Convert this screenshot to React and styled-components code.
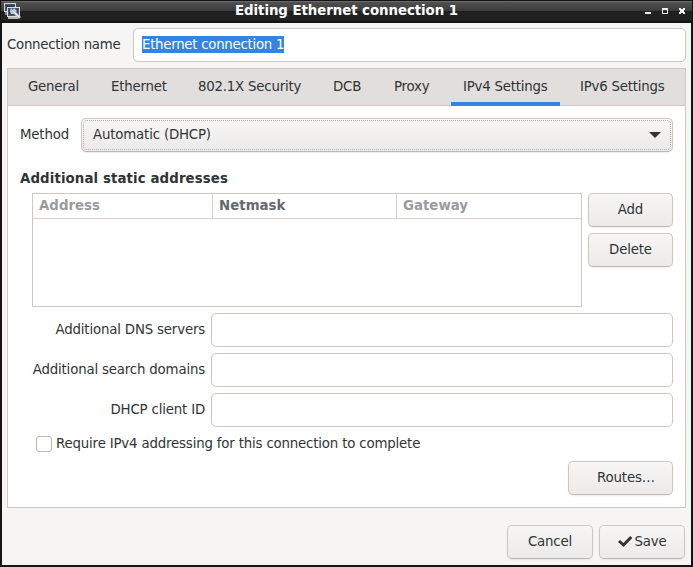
import React from 'react';
import styled, { createGlobalStyle, css } from 'styled-components';

const GlobalStyle = createGlobalStyle`
  *, *::before, *::after { box-sizing: border-box; }
  html, body { margin: 0; padding: 0; background: #101010; overflow: hidden; }
  button, input { font: inherit; color: inherit; letter-spacing: inherit; }
`;

const Frame = styled.div`
  width: 693px;
  height: 567px;
  padding: 0 2px 2px;
  background: #141414;
  color: #2e3436;
  font: 13.333px/16px "DejaVu Sans", sans-serif;
  letter-spacing: -0.17px;
  display: flex;
  flex-direction: column;
`;

const TitleBar = styled.header`
  flex: none;
  height: 23px;
  margin: 0 -1px;
  padding: 0 5px 0 3px;
  display: grid;
  grid-template-columns: 60px 1fr 60px;
  align-items: center;
  background: linear-gradient(#141414 0 1px, #6a6a6a 1px 2px, #515151 2px, #3b3b3b 11px, #202020 11px, #222 20px, #141414 21px);
`;

const Title = styled.h1`
  margin: 0;
  padding: 0 0 1px 2px;
  font-size: 13.333px;
  line-height: 16px;
  font-weight: bold;
  letter-spacing: -0.05px;
  color: #fff;
  text-align: center;
  white-space: nowrap;
`;

const WindowControls = styled.div`
  display: flex;
  justify-content: flex-end;
  svg { display: block; }
`;

const Content = styled.main`
  flex: 1;
  background: #f6f5f4;
  padding: 5px 5px 6px;
  display: flex;
  flex-direction: column;
`;

const NameRow = styled.div`
  display: grid;
  grid-template-columns: 114px 1fr;
  gap: 12px;
  align-items: center;
  margin-bottom: 6px;
  letter-spacing: -0.27px;
`;

const Label = styled.label`
  white-space: nowrap;
  text-align: ${p => (p.$end ? 'right' : 'left')};
`;

const Entry = styled.div`
  height: 34px;
  border: 1px solid #cdc7c2;
  border-radius: 5px;
  background: #fff;
  padding: 7px 8px;
`;

const Selection = styled.span`
  display: inline-block;
  height: 17px;
  line-height: 17px;
  background: #3584e4;
  color: #fff;
  white-space: nowrap;
`;

const Notebook = styled.section`
  height: 440px;
  border: 1px solid #cdc7c2;
  background: #fff;
`;

const TabBar = styled.nav`
  height: 37px;
  padding: 0 4px;
  display: flex;
  background: #e1dedb;
  border-bottom: 1px solid #cdc7c2;
  letter-spacing: -0.21px;
`;

const Tab = styled.div`
  flex: none;
  width: ${p => p.$width}px;
  height: 37px;
  margin: 0 4px;
  padding: 10px 0 0 12px;
  white-space: nowrap;
  ${p => p.$active && css`box-shadow: inset 0 -4px #3584e4;`}
`;

const Page = styled.div`
  padding: 12px;
`;

const buttonFace = css`
  border: 1px solid #cdc7c2;
  border-bottom-color: #bfb8b1;
  border-radius: 5px;
  background: linear-gradient(#f6f5f4 2px, #edebe9 31px);
  box-shadow: inset 0 1px #fbfafa, 0 1px 2px rgba(0, 0, 0, 0.07);
`;

const MethodRow = styled.div`
  display: grid;
  grid-template-columns: 55px 1fr;
  gap: 6px;
  align-items: center;
`;

const Combo = styled.div`
  ${buttonFace}
  height: 34px;
  padding: 1px;
`;

const ComboFocus = styled.div`
  height: 30px;
  border: 1px dotted #a9abaa;
  border-radius: 4px;
  padding: 0 9px;
  display: flex;
  align-items: center;
  justify-content: space-between;
`;

const Heading = styled.h2`
  margin: 19px 0 6px;
  font-size: 13.333px;
  line-height: 16px;
  font-weight: bold;
  letter-spacing: 0.11px;
`;

const Indented = styled.div`
  padding-left: 12px;
`;

const AddressArea = styled.div`
  display: grid;
  grid-template-columns: 550px 85px;
  gap: 6px;
`;

const AddressTable = styled.div`
  height: 114px;
  border: 1px solid #cdc7c2;
`;

const TableHead = styled.div`
  display: grid;
  grid-template-columns: 180px 184px 1fr;
  height: 25px;
  border-bottom: 1px solid #d5d0cc;
`;

const HeadCell = styled.div`
  padding: 4px 6px 0;
  font-weight: bold;
  letter-spacing: 0.02px;
  color: ${p => (p.$dark ? '#66696b' : '#999c9b')};
  &:not(:last-child) { border-right: 1px solid #d5d0cc; }
`;

const ButtonColumn = styled.div`
  display: flex;
  flex-direction: column;
  gap: 6px;
`;

const Button = styled.button`
  ${buttonFace}
  height: 34px;
  width: ${p => p.$width || 85}px;
  padding: 0 0 0 ${p => p.$shift || 0}px;
  display: flex;
  align-items: center;
  justify-content: center;
  line-height: 16px;
  white-space: nowrap;
  svg { margin: 0 1px 2px 0; }
`;

const Fields = styled.div`
  margin-top: 6px;
  display: grid;
  grid-template-columns: 173px 1fr;
  gap: 6px;
  align-items: center;
`;

const CheckRow = styled.div`
  display: flex;
  align-items: center;
  gap: 4px;
  height: 16px;
  margin: 9px 0 9px 4px;
`;

const CheckBox = styled.span`
  width: 16px;
  height: 16px;
  border: 1px solid #bfb8b1;
  border-radius: 3px;
  background: #fff;
`;

const Trailing = styled.div`
  display: flex;
  justify-content: flex-end;
`;

const Actions = styled.footer`
  display: flex;
  justify-content: flex-end;
  gap: 6px;
  padding: 17px 1px 0 0;
`;

const NetworkIcon = () => (
  <svg width="17" height="17" viewBox="0 0 17 17" shapeRendering="crispEdges">
    <path d="M0 0h12v9H0z" fill="#d4d4cc" />
    <path d="M1 1h10v7H1z" fill="#4b5563" />
    <path d="M2 2h8v5H2z" fill="#1c3f75" />
    <path d="M1 9h3v3H1z" fill="#8f908a" />
    <path d="M3 4h13v10H3z" fill="#deded6" />
    <path d="M4 5h11v8H4z" fill="#4b5563" />
    <path d="M5 6h9v6H5z" fill="#234b85" />
    <path d="M4 14h10v2H4z" fill="#b4b5ad" />
    <path d="M7 5l2 2 1-2 3 3-1 1 5 5-2 2-5-5H7L6 8z" fill="#c9cbc7" shapeRendering="auto" />
    <path d="M10 9l5 5" stroke="#f2f2ee" shapeRendering="auto" />
  </svg>
);

const Check = () => (
  <svg width="16" height="16" viewBox="0 0 16 16">
    <path d="M2 8l4.5 4L14.3 4" fill="none" stroke="#2e3436" strokeWidth="3" />
  </svg>
);

const TABS = [
  ['General', 75], ['Ethernet', 79], ['802.1X Security', 127], ['DCB', 53],
  ['Proxy', 61], ['IPv4 Settings', 109], ['IPv6 Settings', 109],
];

const FIELDS = ['Additional DNS servers', 'Additional search domains', 'DHCP client ID'];

export default function App() {
  return (
    <>
      <GlobalStyle />
      <Frame>
        <TitleBar>
          <NetworkIcon />
          <Title>Editing Ethernet connection 1</Title>
          <WindowControls>
            <svg width="44" height="9" viewBox="0 0 44 9" fill="#eee" shapeRendering="crispEdges">
              <path d="M2 5h6v2H2z" />
              <path fillRule="evenodd" d="M19 1h6v6h-6zM20 3v3h4V3z" />
              <path d="M36 1h2v1h2V1h2v2h-1v2h1v2h-2V6h-2v1h-2V5h1V3h-1z" />
            </svg>
          </WindowControls>
        </TitleBar>
        <Content>
          <NameRow>
            <Label>Connection name</Label>
            <Entry><Selection>Ethernet connection 1</Selection></Entry>
          </NameRow>
          <Notebook>
            <TabBar>
              {TABS.map(([name, width]) => (
                <Tab key={name} $width={width} $active={name === 'IPv4 Settings'}>{name}</Tab>
              ))}
            </TabBar>
            <Page>
              <MethodRow>
                <Label>Method</Label>
                <Combo>
                  <ComboFocus>
                    <span>Automatic (DHCP)</span>
                    <svg width="12" height="6" viewBox="0 0 12 6"><path d="M0 0h12L6 6z" fill="#2e3436" /></svg>
                  </ComboFocus>
                </Combo>
              </MethodRow>
              <Heading>Additional static addresses</Heading>
              <Indented>
                <AddressArea>
                  <AddressTable>
                    <TableHead>
                      <HeadCell>Address</HeadCell>
                      <HeadCell $dark>Netmask</HeadCell>
                      <HeadCell>Gateway</HeadCell>
                    </TableHead>
                  </AddressTable>
                  <ButtonColumn>
                    <Button>Add</Button>
                    <Button>Delete</Button>
                  </ButtonColumn>
                </AddressArea>
                <Fields>
                  {FIELDS.map(name => (
                    <React.Fragment key={name}>
                      <Label $end>{name}</Label>
                      <Entry />
                    </React.Fragment>
                  ))}
                </Fields>
                <CheckRow>
                  <CheckBox />
                  <Label>Require IPv4 addressing for this connection to complete</Label>
                </CheckRow>
                <Trailing><Button $width={105} $shift={11}>Routes…</Button></Trailing>
              </Indented>
            </Page>
          </Notebook>
          <Actions>
            <Button $width={86}>Cancel</Button>
            <Button $width={86}><Check />Save</Button>
          </Actions>
        </Content>
      </Frame>
    </>
  );
}
